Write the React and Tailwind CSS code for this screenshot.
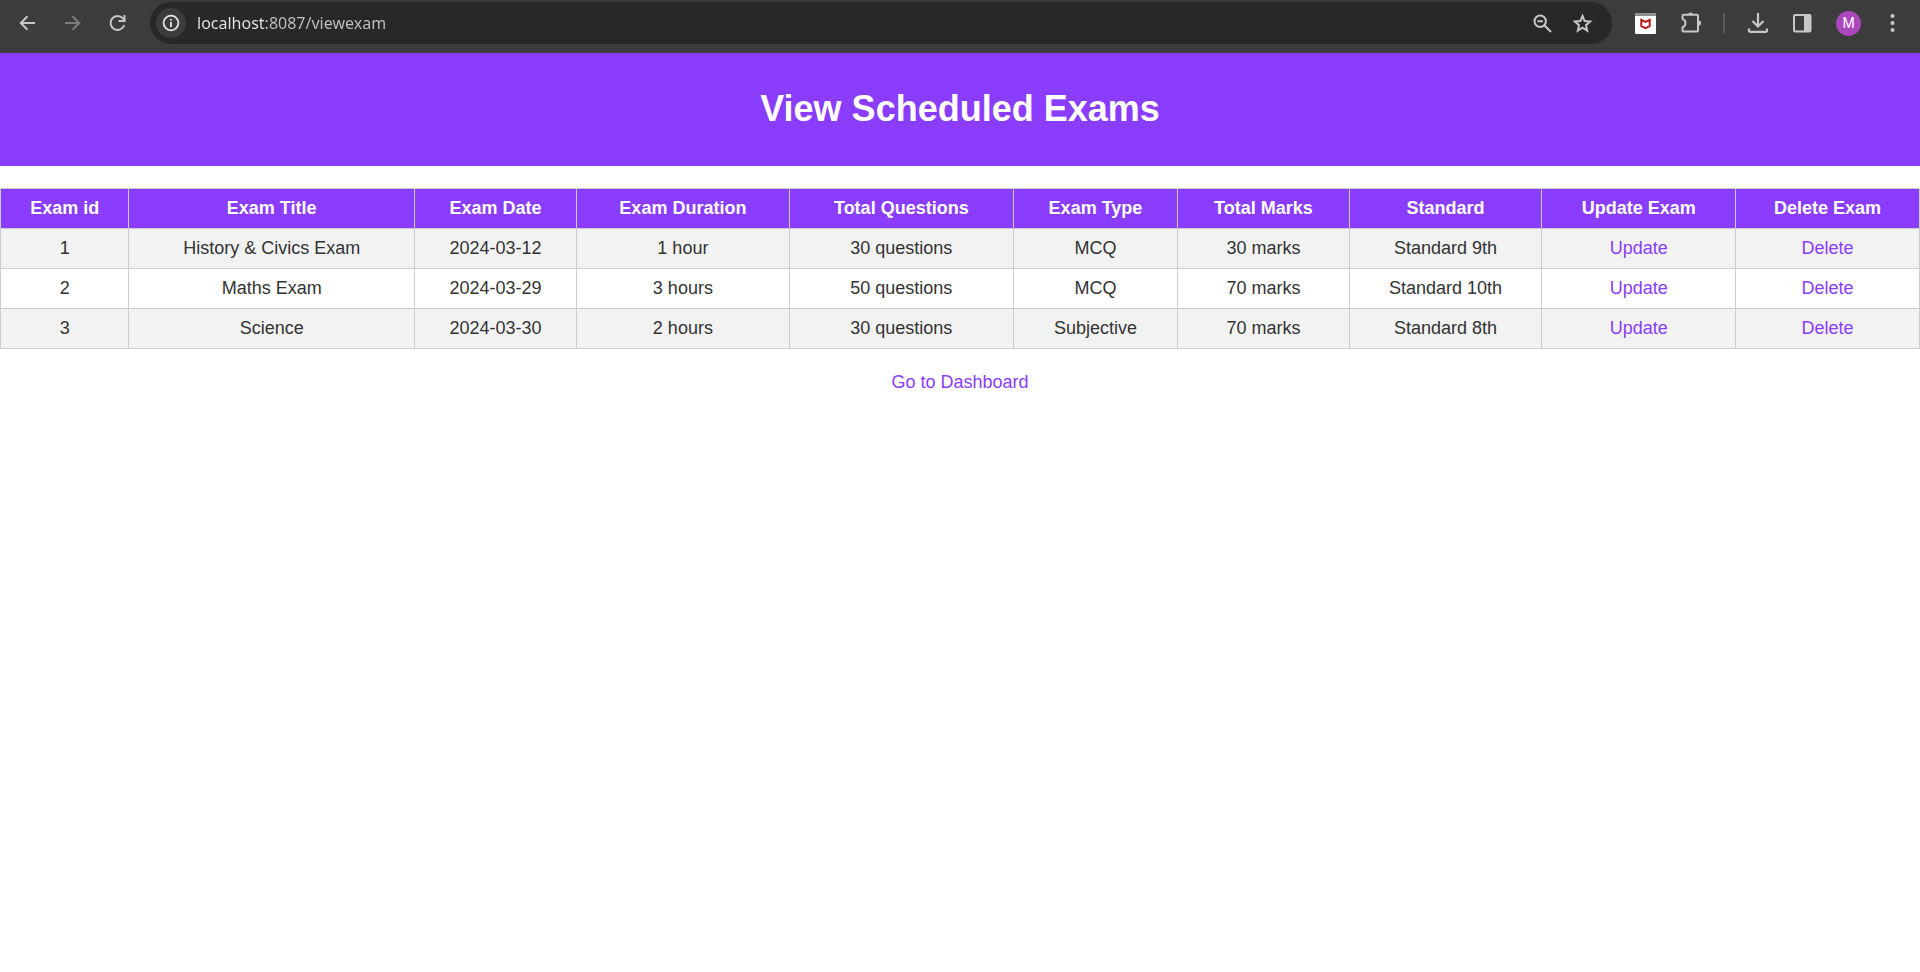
const exams = [
  { id: 1, title: 'History & Civics Exam', date: '2024-03-12', duration: '1 hour', questions: '30 questions', type: 'MCQ', marks: '30 marks', standard: 'Standard 9th' },
  { id: 2, title: 'Maths Exam', date: '2024-03-29', duration: '3 hours', questions: '50 questions', type: 'MCQ', marks: '70 marks', standard: 'Standard 10th' },
  { id: 3, title: 'Science', date: '2024-03-30', duration: '2 hours', questions: '30 questions', type: 'Subjective', marks: '70 marks', standard: 'Standard 8th' },
];

const headings = [
  'Exam id',
  'Exam Title',
  'Exam Date',
  'Exam Duration',
  'Total Questions',
  'Exam Type',
  'Total Marks',
  'Standard',
  'Update Exam',
  'Delete Exam',
];

function ToolButton({ label, className = 'text-[#c7c7c7]', children }) {
  return (
    <button type="button" aria-label={label} className={`flex size-6 shrink-0 items-center justify-center ${className}`}>
      <svg width="24" height="24" viewBox="0 0 24 24" fill="none" stroke="currentColor" strokeWidth="2">
        {children}
      </svg>
    </button>
  );
}

function Toolbar() {
  return (
    <div className="flex items-center gap-[21px] bg-[#3c3c3c] pt-[2px] pr-[14px] pb-[9px] pl-[15px]">
      <ToolButton label="Back">
        <path d="M20 12H6.5M12.5 5.2L5.8 12l6.700 6.800" />
      </ToolButton>
      <ToolButton label="Forward" className="text-[#7d7d7d]">
        <path d="M5 12h13.500M12.500 5.200L19.200 12l-6.700 6.800" />
      </ToolButton>
      <ToolButton label="Reload">
        <path d="M19.300 14A7 7 0 1 1 17.900 7.300l1.700 2" />
        <path d="M19.500 4V10H13.500" />
      </ToolButton>

      <div className="flex h-[42px] min-w-0 flex-1 items-center rounded-full bg-[#282828] pr-[18px] pl-1.5">
        <button type="button" aria-label="View site information" className="flex size-[30px] shrink-0 items-center justify-center rounded-full bg-[#3c3c3c] text-[#e3e3e3]">
          <svg width="20" height="20" viewBox="0 0 20 20" fill="none" stroke="currentColor" strokeWidth="1.800">
            <circle cx="10" cy="10" r="7.400" />
            <path d="M10 9v5M10 6v1.800" />
          </svg>
        </button>
        <input
          type="text"
          aria-label="Address"
          defaultValue="localhost:8087/viewexam"
          className="ml-[11px] min-w-0 flex-1 bg-[linear-gradient(90deg,#e8e8e8_68px,#c0c0c0_68px)] bg-clip-text font-['Noto_Sans','Open_Sans',sans-serif] text-[16px] text-transparent caret-white outline-none"
        />
        <div className="flex gap-4">
          <ToolButton label="Zoom">
            <circle cx="10.200" cy="10.200" r="5.700" />
            <path d="M14.300 14.300l6.700 6.700M7.500 10.200h5.400" />
          </ToolButton>
          <ToolButton label="Bookmark this tab">
            <path
              d="M12.500 5l2.150 5.050 5.450.5-4.100 3.650 1.200 5.400-4.700-2.850-4.700 2.850 1.200-5.400-4.100-3.650 5.450-.5z"
              strokeWidth="2"
            />
          </ToolButton>
        </div>
      </div>

      <ToolButton label="McAfee WebAdvisor">
        <rect x="2" y="2" width="21" height="21" rx="1" fill="#fff" stroke="none" />
        <path d="M2 3a1 1 0 0 1 1-1h19a1 1 0 0 1 1 1v2H2z" fill="#8e8e8e" stroke="none" />
        <path d="M8.300 8.800l4.200 2 4.200-2v6.400l-4.200 2-4.200-2z" stroke="#c01818" strokeWidth="2" />
      </ToolButton>
      <ToolButton label="Extensions">
        <path d="M5.500 3.800H19a1 1 0 0 1 1 1V19.500a1 1 0 0 1-1 1H5.500a1 1 0 0 1-1-1V16.200C8.400 15 8.400 9.300 4.500 8.100V4.800a1 1 0 0 1 1-1z" strokeLinejoin="round" />
        <path d="M10.200 3.600a2.400 2.200 0 0 1 4.800 0zM20.600 9.500a2.500 2.600 0 0 1 0 5.200z" fill="currentColor" stroke="none" />
      </ToolButton>
      <div className="h-5 w-[2px] shrink-0 bg-[#5a5a5a]" />
      <ToolButton label="Downloads">
        <path d="M12 2v13M6.500 10l5.500 5.500 5.500-5.500" strokeWidth="2.200" />
        <path d="M3 17.500v2.200a1.200 1.200 0 0 0 1.200 1.200h15.600a1.200 1.200 0 0 0 1.200-1.200v-2.200" strokeWidth="2.200" />
      </ToolButton>
      <ToolButton label="Side panel">
        <rect x="3" y="4" width="16.500" height="16.500" rx="1.200" />
        <path d="M13 3.500h6.500v17H13z" fill="currentColor" stroke="none" />
      </ToolButton>
      <button type="button" aria-label="Profile" className="flex size-[25px] shrink-0 items-center justify-center rounded-full bg-[#ab47bc] font-[Roboto,sans-serif] text-[14px] text-white">
        M
      </button>
      <ToolButton label="Menu">
        <g fill="currentColor" stroke="none">
          <circle cx="10.500" cy="5" r="2" />
          <circle cx="10.500" cy="12" r="2" />
          <circle cx="10.500" cy="19" r="2" />
        </g>
      </ToolButton>
    </div>
  );
}

const cell = 'border border-[#cccccc] px-[9px] py-[9px]';
const link = 'text-[#8a3cff]';

export default function App() {
  return (
    <div className="min-h-screen bg-white font-['Liberation_Sans',Arial,sans-serif] text-[18px] leading-[21px] text-[#333333]">
      <Toolbar />
      <header className="bg-[#8a3cff] pt-9 pb-[37px] text-center text-white">
        <h1 className="text-[36px] leading-[40px] font-bold">View Scheduled Exams</h1>
      </header>
      <main>
        <table className="mt-[22px] w-full border-collapse text-center">
          <thead>
            <tr className="bg-[#8a3cff] text-white">
              {headings.map((h) => (
                <th key={h} scope="col" className={`${cell} font-bold`}>
                  {h}
                </th>
              ))}
            </tr>
          </thead>
          <tbody>
            {exams.map((e) => (
              <tr key={e.id} className="odd:bg-[#f2f2f2]">
                <td className={cell}>{e.id}</td>
                <td className={cell}>{e.title}</td>
                <td className={cell}>{e.date}</td>
                <td className={cell}>{e.duration}</td>
                <td className={cell}>{e.questions}</td>
                <td className={cell}>{e.type}</td>
                <td className={cell}>{e.marks}</td>
                <td className={cell}>{e.standard}</td>
                <td className={cell}>
                  <a href="#update" className={link}>Update</a>
                </td>
                <td className={cell}>
                  <a href="#delete" className={link}>Delete</a>
                </td>
              </tr>
            ))}
          </tbody>
        </table>
        <p className="mt-[23px] text-center">
          <a href="#dashboard" className={link}>Go to Dashboard</a>
        </p>
      </main>
    </div>
  );
}
